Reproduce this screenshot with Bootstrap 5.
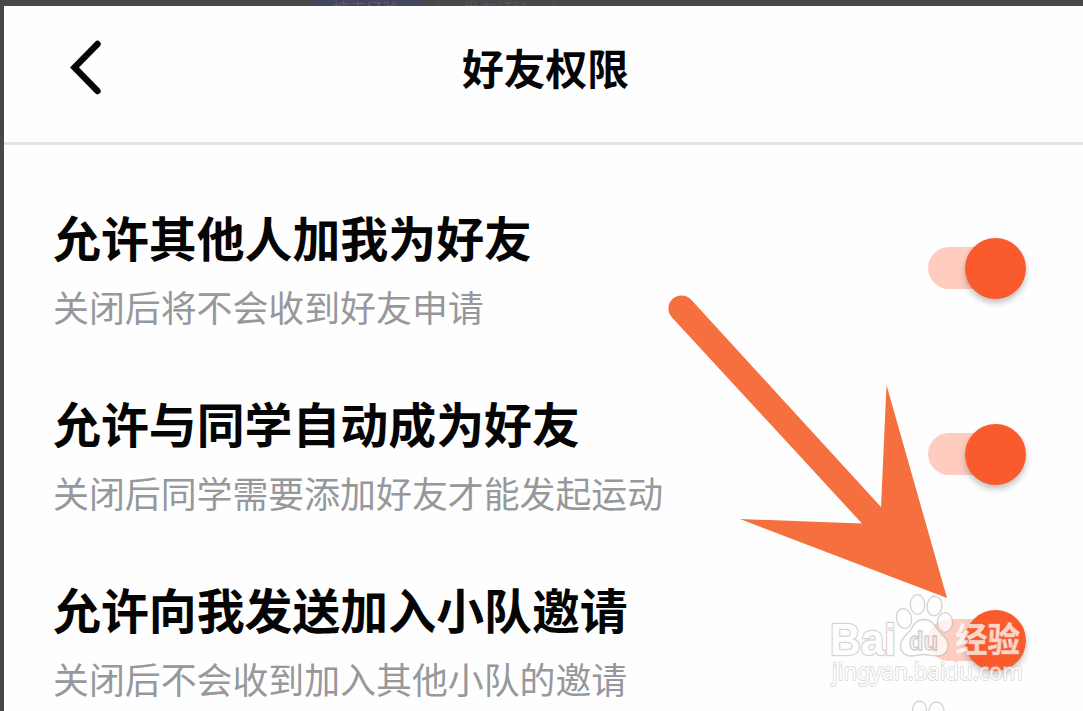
<!DOCTYPE html>
<html lang="zh-CN">
<head>
    <meta charset="UTF-8">
    <meta name="viewport" content="width=device-width, initial-scale=1.0">
    <title>好友权限</title>
    <link href="https://cdn.jsdelivr.net/npm/bootstrap@5.3.2/dist/css/bootstrap.min.css" rel="stylesheet">
    <style>
        body {
            width: 1083px;
            height: 711px;
            background-color: #484848;
            font-family: "Noto Sans CJK SC", sans-serif;
            color: #050505;
        }
        .backdrop-bar {
            height: 6px;
            padding-left: 310px;
            gap: 16px;
            font-size: 16.5px;
            line-height: 18px;
            color: #5c5e70;
        }
        .tab-solid {
            width: 112px;
            background-color: #444660;
        }
        .tab-outline {
            width: 116px;
            border: 1px solid #50526a;
            border-width: 0 1px;
            color: #55576b;
        }
        .backdrop-side {
            width: 4px;
            background: radial-gradient(circle at 8px 122px, #3c4c38 8px, transparent 9px);
        }
        .screen {
            background-color: #fefefe;
            height: 705px;
        }
        .screen-header {
            height: 139px;
            padding-bottom: 14px;
            border-bottom: 3px solid #e4e4e4;
        }
        .screen-header h1 {
            font-size: 41.8px;
            font-weight: 700;
            line-height: 60px;
        }
        .back-btn {
            left: 60px;
            top: 30px;
            line-height: 0;
        }
        .settings-list {
            padding-top: 58px;
        }
        .setting {
            height: 186px;
            padding: 0 57px 0 49px;
        }
        .setting h2 {
            font-size: 47.9px;
            font-weight: 700;
            line-height: 66px;
            margin-bottom: 12px;
        }
        .setting p {
            font-size: 35.9px;
            line-height: 50px;
            color: #96989b;
        }
        .toggle {
            width: 98px;
            height: 60px;
            margin-top: 35px;
        }
        .toggle-track {
            width: 82px;
            height: 42px;
            border-radius: 21px;
            background-color: #ffcdc0;
        }
        .toggle-knob {
            width: 61px;
            height: 61px;
            margin-left: -45px;
            border-radius: 50%;
            background-color: #fb5b2c;
            box-shadow: 0 4px 6px rgba(0, 0, 0, 0.24);
        }
        .overlay {
            left: 0;
            top: 0;
            pointer-events: none;
        }
        .wm-text {
            fill: #fff;
            stroke: #c8c8c8;
            stroke-linejoin: round;
            paint-order: stroke;
        }
    </style>
</head>
<body class="position-relative overflow-hidden">
    <div class="backdrop-bar d-flex overflow-hidden text-center">
        <div class="tab-solid">搜索经验</div>
        <div class="tab-outline">发布经验</div>
    </div>

    <div class="d-flex">
        <div class="backdrop-side flex-shrink-0"></div>
        <main class="screen flex-grow-1 overflow-hidden">
            <header class="screen-header position-relative d-flex align-items-center justify-content-center">
                <a href="#" class="back-btn position-absolute" aria-label="返回">
                    <svg width="44" height="64" viewBox="0 0 44 64" fill="none" stroke="#050505" stroke-width="6.4" stroke-linecap="round">
                        <path d="M33.500 8L10.500 31.500L33.500 55"/>
                    </svg>
                </a>
                <h1 class="m-0 ps-1">好友权限</h1>
            </header>

            <!-- Permissions -->
            <div class="settings-list">
                <section class="setting d-flex justify-content-between align-items-start">
                    <div>
                        <h2>允许其他人加我为好友</h2>
                        <p class="m-0">关闭后将不会收到好友申请</p>
                    </div>
                    <div class="toggle d-flex align-items-center" role="switch" aria-checked="true">
                        <div class="toggle-track flex-shrink-0"></div>
                        <div class="toggle-knob flex-shrink-0"></div>
                    </div>
                </section>
                <section class="setting d-flex justify-content-between align-items-start">
                    <div>
                        <h2>允许与同学自动成为好友</h2>
                        <p class="m-0">关闭后同学需要添加好友才能发起运动</p>
                    </div>
                    <div class="toggle d-flex align-items-center" role="switch" aria-checked="true">
                        <div class="toggle-track flex-shrink-0"></div>
                        <div class="toggle-knob flex-shrink-0"></div>
                    </div>
                </section>
                <section class="setting d-flex justify-content-between align-items-start">
                    <div>
                        <h2>允许向我发送加入小队邀请</h2>
                        <p class="m-0">关闭后不会收到加入其他小队的邀请</p>
                    </div>
                    <div class="toggle d-flex align-items-center" role="switch" aria-checked="true">
                        <div class="toggle-track flex-shrink-0"></div>
                        <div class="toggle-knob flex-shrink-0"></div>
                    </div>
                </section>
            </div>
        </main>
    </div>

    <svg class="overlay position-absolute" width="1083" height="711" viewBox="0 0 1083 711">
        <!-- Arrow -->
        <path fill="#f66f3e" d="M691 299.500L881 507L886.500 385L947 598L740 519L862 523.500L672 317.500A12.500 12.500 0 0 1 691 299.500Z"/>

        <!-- Watermark -->
        <g opacity=".74">
            <text class="wm-text" x="830" y="654.500" font-family="Liberation Sans, sans-serif" font-weight="700" font-size="45" textLength="66" lengthAdjust="spacingAndGlyphs" stroke-width="2.600">Bai</text>
            <g fill="#fff" stroke="#c4c4c4" stroke-width="1.300">
                <ellipse cx="904" cy="618.500" rx="7.500" ry="10" transform="rotate(-12 904 618.500)"/>
                <ellipse cx="917.500" cy="604.500" rx="7.200" ry="9.800"/>
                <ellipse cx="934.500" cy="606" rx="7.500" ry="9.800" transform="rotate(8 934.500 606)"/>
                <ellipse cx="945" cy="622.500" rx="7.500" ry="9.800"/>
                <path d="M924 619.500C930 619.500 934 623 937 629C940 634 948 637 948 645C948 652 944 656 937 656C932 656 928 654.500 924 654.500C919 654.500 915 656 911 656C904 656 900 651 900.500 645C901 638 908 634 911 629C914 623 918 619.500 924 619.500Z"/>
                <ellipse cx="919.500" cy="710" rx="7" ry="9"/>
                <ellipse cx="936.500" cy="711" rx="7.500" ry="9"/>
            </g>
            <text x="909" y="650" font-family="Liberation Sans, sans-serif" font-weight="700" font-size="25" textLength="29" lengthAdjust="spacingAndGlyphs" fill="#f6f0ef" stroke="#c4bdbb" stroke-width="1.300">du</text>
            <text class="wm-text" x="955" y="652" font-family="Noto Sans CJK SC, sans-serif" font-weight="700" font-size="34" textLength="65" lengthAdjust="spacingAndGlyphs" stroke-width=".6">经验</text>
            <text class="wm-text" x="832" y="680" font-family="Noto Sans, sans-serif" font-size="23.500" textLength="191" lengthAdjust="spacingAndGlyphs" stroke-width="1.600">jingyan.baidu.com</text>
        </g>
    </svg>

    <script src="https://cdn.jsdelivr.net/npm/bootstrap@5.3.2/dist/js/bootstrap.bundle.min.js"></script>
</body>
</html>
